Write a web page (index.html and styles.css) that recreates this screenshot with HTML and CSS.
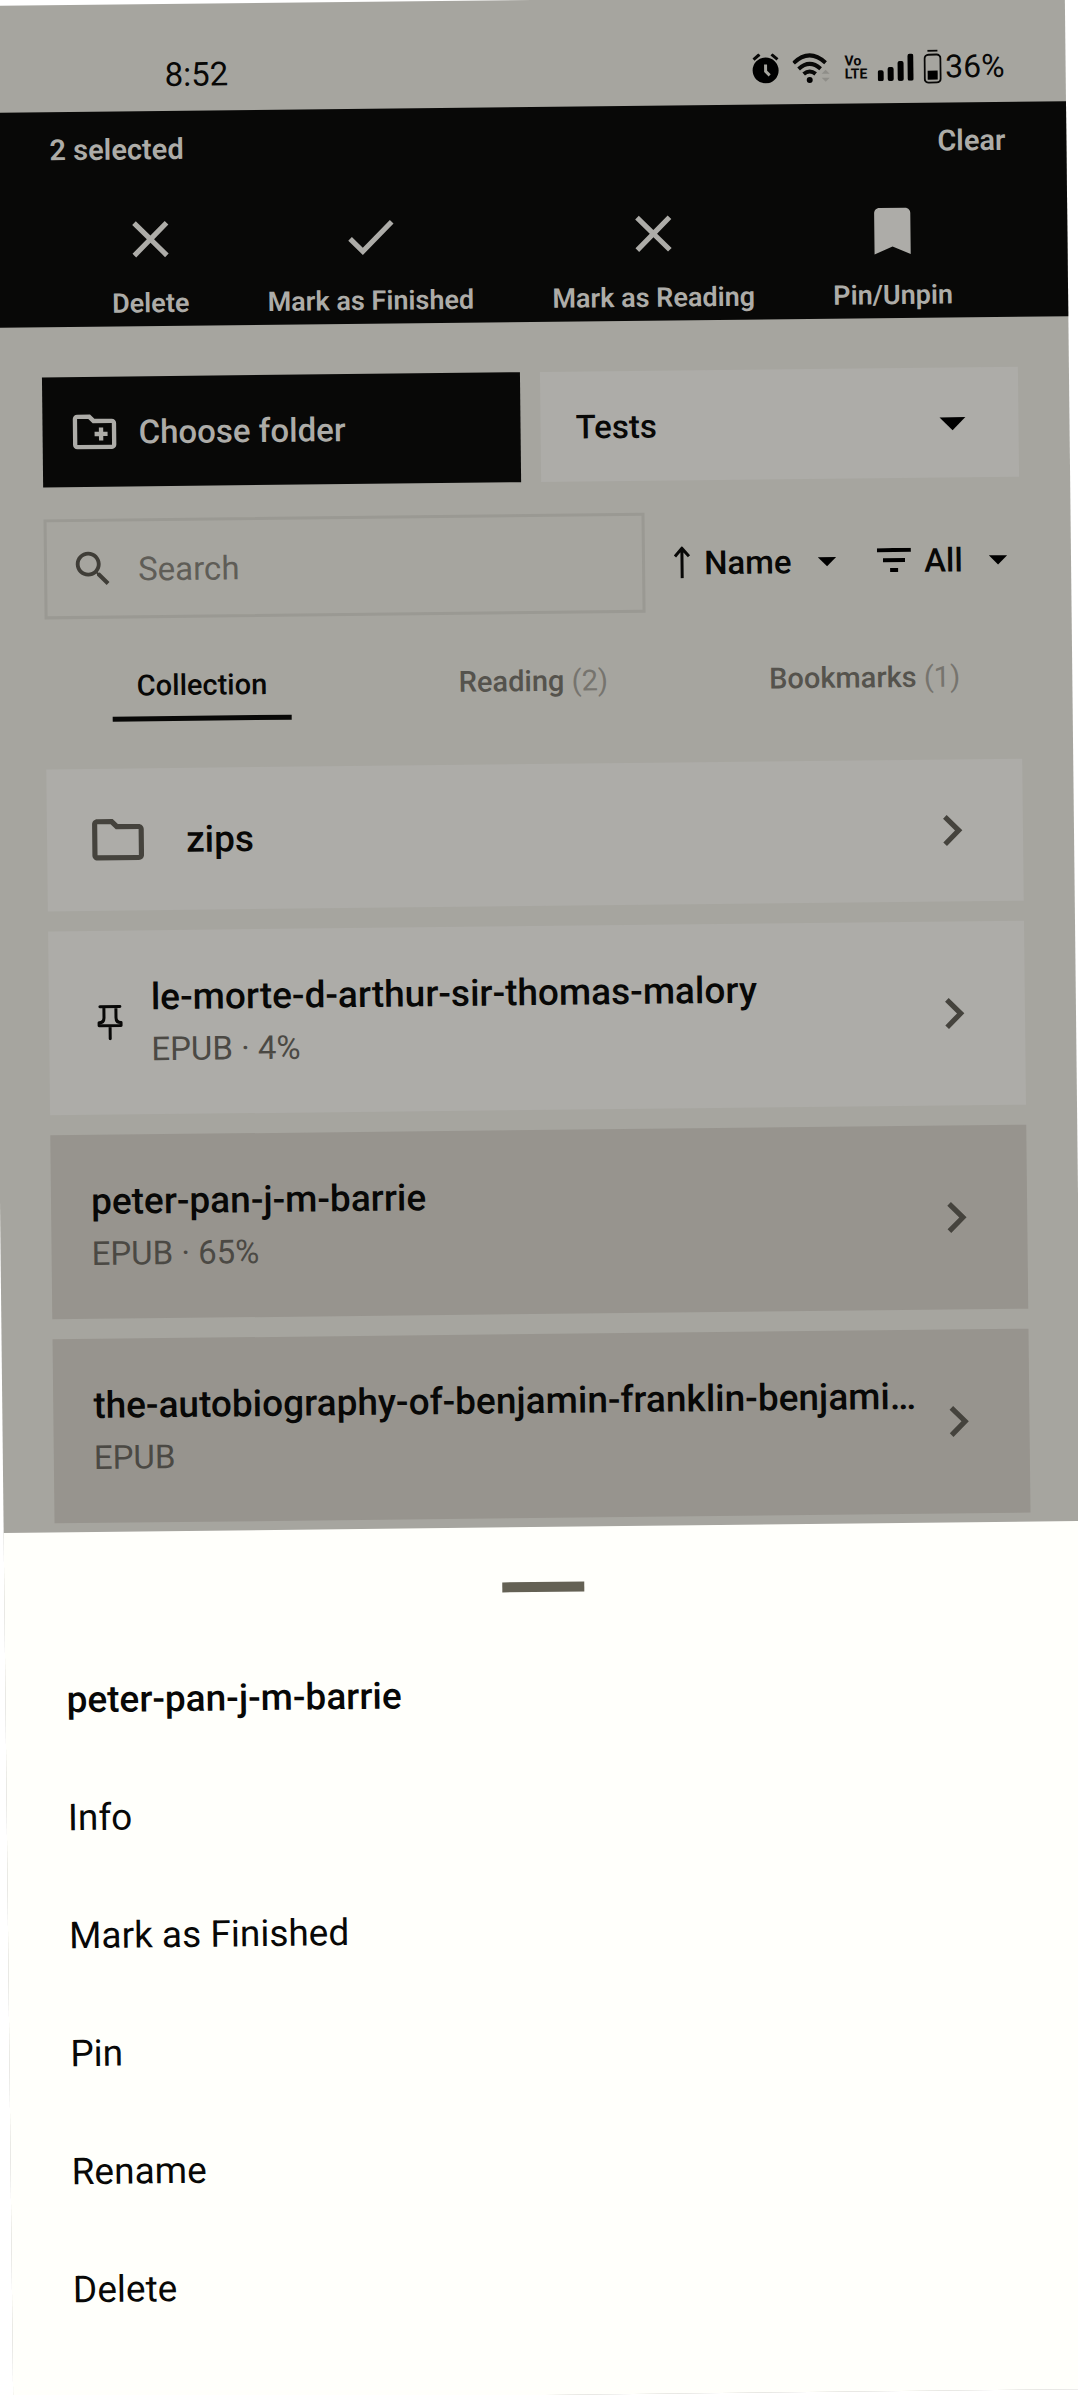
FILE: index.html
```html
<!DOCTYPE html>
<html lang="en">
<head>
    <meta charset="UTF-8">
    <meta name="viewport" content="width=device-width, initial-scale=1">
    <title>Library</title>
    <link rel="stylesheet" href="styles.css">
</head>
<body>
<!-- shared icons -->
<svg class="sprite" aria-hidden="true">
    <symbol id="close" viewBox="0 0 24 24"><path d="M19 6.41L17.59 5 12 10.59 6.41 5 5 6.41 10.59 12 5 17.59 6.41 19 12 13.41 17.59 19 19 17.59 13.41 12z"/></symbol>
    <symbol id="check" viewBox="0 0 24 24"><path d="M9 16.17L4.83 12l-1.42 1.41L9 19 21 7l-1.41-1.41z"/></symbol>
    <symbol id="bookmark" viewBox="0 0 24 24"><path d="M17 3H7c-1.1 0-2 .9-2 2v16l7-3 7 3V5c0-1.1-.9-2-2-2z"/></symbol>
    <symbol id="caret" viewBox="0 0 24 24"><path d="M7 10l5 5 5-5z"/></symbol>
    <symbol id="chevron" viewBox="0 0 24 24"><path d="M10 6L8.59 7.41 13.17 12l-4.58 4.59L10 18l6-6z"/></symbol>
</svg>
<div class="screen">
    <div class="status">
        <span class="time">8:52</span>
        <div class="statusIcons">
            <svg width="28" height="30" viewBox="0 0 28 30"><circle cx="14" cy="17" r="13"/><path d="M2 6l6-5M26 6l-6-5" stroke="#080807" stroke-width="3"/><path d="M14 11v7l4 4" fill="none" stroke="#a6a59f" stroke-width="3"/></svg>
            <svg class="wifi" width="38" height="30" viewBox="0 0 38 30"><g fill="none" stroke="#080807" stroke-width="4"><path d="M1 10Q17-5 33 10"/><path d="M6 16Q17 6 28 16"/><path d="M11 21Q17 16 23 21"/></g><circle cx="17" cy="27" r="3"/><path d="M29 21l4-4 4 4zM29 25l4 4 4-4z" fill="#8f8e89"/></svg>
            <span class="volte">Vo<br>LTE</span>
            <svg class="signal" width="36" height="28" viewBox="0 0 36 28"><rect y="17" width="6" height="11" rx="2"/><rect x="10" y="14" width="6" height="14" rx="2"/><rect x="20" y="8" width="6" height="20" rx="2"/><rect x="30" y="1" width="6" height="27" rx="2"/></svg>
            <svg class="battery" width="18" height="34" viewBox="0 0 18 34"><path d="M4 1h10" stroke="#080807" stroke-width="2"/><rect x="1" y="5" width="16" height="28" rx="4" fill="none" stroke="#080807" stroke-width="2"/><rect x="4" y="21" width="10" height="9"/></svg>
            <span class="percent">36%</span>
        </div>
    </div>

    <div class="selection">
        <div class="selectionTop">
            <span>2 selected</span>
            <button type="button">Clear</button>
        </div>
        <div class="actions">
            <button type="button"><svg class="icon"><use href="#close"/></svg>Delete</button>
            <button type="button"><svg class="icon"><use href="#check"/></svg>Mark as Finished</button>
            <button type="button"><svg class="icon"><use href="#close"/></svg>Mark as Reading</button>
            <button type="button"><svg class="icon"><use href="#bookmark"/></svg>Pin/Unpin</button>
        </div>
    </div>

    <div class="library">
        <div class="folders">
            <button type="button" class="choose">
                <svg width="52" height="52" viewBox="0 0 24 24"><path d="M20 6h-8l-2-2H4c-1.11 0-1.99.89-1.99 2L2 18c0 1.11.89 2 2 2h16c1.11 0 2-.89 2-2V8c0-1.11-.89-2-2-2zm0 12H4V6h5.17l2 2H20v10zm-8-4h2v2h2v-2h2v-2h-2v-2h-2v2h-2z"/></svg>
                Choose folder
            </button>
            <label class="folderSelect">
                <select aria-label="Folder"><option>Tests</option></select>
                <svg class="icon"><use href="#caret"/></svg>
            </label>
        </div>

        <div class="filters">
            <label class="search">
                <svg width="46" height="46" viewBox="0 0 24 24"><path d="M15.5 14h-.79l-.28-.27C15.41 12.59 16 11.11 16 9.5 16 5.91 13.09 3 9.5 3S3 5.91 3 9.5 5.91 16 9.5 16c1.61 0 3.09-.59 4.23-1.57l.27.28v.79l5 4.99L20.49 19l-4.99-5zm-6 0C7.01 14 5 11.99 5 9.5S7.01 5 9.5 5 14 7.01 14 9.5 11.99 14 9.5 14z"/></svg>
                <input type="text" placeholder="Search" aria-label="Search">
            </label>
            <label class="filter">
                <svg width="18" height="32" viewBox="0 0 18 32" fill="none" stroke="#080807" stroke-width="3"><path d="M9 32V2M2 10l7-8 7 8"/></svg>
                <select aria-label="Sort by"><option>Name</option></select>
                <svg class="smallCaret"><use href="#caret"/></svg>
            </label>
            <label class="filter">
                <svg width="34" height="24" viewBox="0 0 34 24"><path d="M0 0h34v4H0zM6 10h22v4H6zM13 20h8v4h-8z"/></svg>
                <select aria-label="Filter"><option>All</option></select>
                <svg class="smallCaret"><use href="#caret"/></svg>
            </label>
        </div>
    </div>

    <div class="tabs">
        <button type="button" class="active">Collection</button>
        <button type="button">Reading <span>(2)</span></button>
        <button type="button">Bookmarks <span>(1)</span></button>
    </div>

    <div class="books">
        <a href="#" class="card folder">
            <svg class="icon" viewBox="0 0 24 24"><path d="M9.17 6l2 2H20v10H4V6h5.17M10 4H4c-1.1 0-1.99.9-1.99 2L2 18c0 1.1.9 2 2 2h16c1.1 0 2-.9 2-2V8c0-1.1-.9-2-2-2h-8l-2-2z"/></svg>
            <div class="text"><div class="name">zips</div></div>
            <svg class="icon"><use href="#chevron"/></svg>
        </a>
        <a href="#" class="card">
            <svg class="pin" width="26" height="36" viewBox="0 0 26 36" fill="none" stroke="#080807" stroke-width="3" stroke-linejoin="round" stroke-linecap="round"><path d="M3 2h20M7 2v11q0 5-5 5v3h22v-3q-5 0-5-5V2M13 21v13"/></svg>
            <div class="text"><div class="name">le-morte-d-arthur-sir-thomas-malory</div><div class="info">EPUB · 4%</div></div>
            <svg class="icon"><use href="#chevron"/></svg>
        </a>
        <a href="#" class="card selected">
            <div class="text"><div class="name">peter-pan-j-m-barrie</div><div class="info">EPUB · 65%</div></div>
            <svg class="icon"><use href="#chevron"/></svg>
        </a>
        <a href="#" class="card selected">
            <div class="text"><div class="name">the-autobiography-of-benjamin-franklin-benjami…</div><div class="info">EPUB</div></div>
            <svg class="icon"><use href="#chevron"/></svg>
        </a>
    </div>

    <div class="sheet">
        <div class="handle"></div>
        <h2>peter-pan-j-m-barrie</h2>
        <button type="button">Info</button>
        <button type="button">Mark as Finished</button>
        <button type="button">Pin</button>
        <button type="button">Rename</button>
        <button type="button">Delete</button>
    </div>
</div>
</body>
</html>
```
FILE: styles.css
```css
* {
    box-sizing: border-box;
}

html, body {
    margin: 0;
    background: #fff;
    overflow: hidden;
}

body, button, select, input {
    font-family: Roboto, "Noto Sans", sans-serif;
    color: #080807;
}

button, select, input {
    margin: 0;
    padding: 0;
    border: 0;
    background: none;
    appearance: none;
    outline: none;
}

svg {
    display: block;
    flex: none;
}

.sprite {
    display: none;
}

.icon {
    width: 62px;
    height: 62px;
}

/* the whole screen is slightly tilted */
.screen {
    display: flex;
    flex-direction: column;
    min-height: 100vh;
    background: #a6a59f;
    transform: rotate(-0.63deg);
}

/* status bar */
.status {
    display: flex;
    justify-content: space-between;
    align-items: center;
    height: 107px;
    padding: 34px 61px 0 177px;
}

.time {
    font-size: 33px;
}

.statusIcons {
    display: flex;
    align-items: center;
}

.wifi {
    margin-left: 13px;
}

.volte {
    margin-left: 14px;
    font-size: 14px;
    font-weight: bold;
    line-height: 13px;
}

.signal {
    margin-left: 10px;
}

.battery {
    margin-left: 10px;
}

.percent {
    margin-left: 4px;
    font-size: 32px;
}

/* selection toolbar */
.selection {
    height: 215px;
    padding: 20px 61px 0;
    background: #080807;
    color: #adaca8;
}

.selection button {
    color: #adaca8;
    font-weight: 600;
}

.selectionTop {
    display: flex;
    justify-content: space-between;
    font-size: 29px;
    font-weight: 600;
    line-height: 36px;
}

.selectionTop button {
    font-size: 29px;
}

.actions {
    display: flex;
    justify-content: space-between;
    padding: 41px 54px 0 61px;
}

.actions button {
    display: flex;
    flex-direction: column;
    align-items: center;
    gap: 17px;
    font-size: 27px;
    line-height: 32px;
}

.actions svg {
    fill: #adaca8;
}

/* folder row */
.library {
    padding: 50px 51px 0;
}

.folders {
    display: grid;
    grid-template-columns: 1fr 1fr;
    gap: 20px;
}

.choose {
    display: flex;
    align-items: center;
    gap: 18px;
    height: 110px;
    padding: 0 26px;
    background: #080807;
    color: #adaca8;
    font-size: 33px;
    font-weight: 500;
}

.choose svg {
    fill: #adaca8;
}

.folderSelect {
    display: flex;
    align-items: center;
    padding: 0 35px;
    background: #adaca8;
}

select {
    font-size: 33px;
    font-weight: 500;
    opacity: 1;
}

.folderSelect select {
    flex: 1;
}

/* search, sort, filter */
.filters {
    display: flex;
    align-items: center;
    margin-top: 32px;
}

.search {
    display: flex;
    flex: 1;
    align-items: center;
    gap: 22px;
    height: 100px;
    padding: 0 23px;
    border: 3px solid #9a9993;
}

.search svg {
    fill: #3f3d37;
}

.search input {
    flex: 1;
    min-width: 0;
    font-size: 33px;
}

.search input::placeholder {
    color: #5f5d57;
    opacity: 1;
}

.filter {
    display: flex;
    align-items: center;
    gap: 13px;
    margin-left: 28px;
}

.smallCaret {
    width: 44px;
    height: 44px;
}

/* tabs */
.tabs {
    display: grid;
    grid-template-columns: repeat(3, 1fr);
    justify-items: center;
    margin-top: 37px;
    padding: 0 42px;
}

.tabs button {
    height: 66px;
    padding: 0 24px 2px;
    border-bottom: 5px solid transparent;
    color: #55534d;
    font-size: 29px;
    font-weight: 500;
}

.tabs span {
    color: #76746e;
    font-weight: 400;
}

.tabs .active {
    border-color: #080807;
    color: #080807;
}

/* list */
.books {
    display: flex;
    flex-direction: column;
    gap: 20px;
    padding: 47px 51px 9px;
}

.card {
    display: flex;
    align-items: center;
    height: 184px;
    padding: 0 40px;
    background: #adaca8;
    color: #080807;
    text-decoration: none;
}

.card .icon {
    fill: #45433d;
}

.selected {
    background: #97948e;
}

.folder {
    height: 142px;
}

.folder .text {
    margin-left: 37px;
}

.pin {
    margin: 0 28px 0 8px;
}

.text {
    flex: 1;
    min-width: 0;
    padding-top: 2px;
}

.name {
    overflow: hidden;
    font-size: 37px;
    font-weight: 500;
    line-height: 52px;
    text-overflow: ellipsis;
    white-space: nowrap;
}

.info {
    color: #4b4944;
    font-size: 33px;
    line-height: 52px;
}

/* bottom sheet */
.sheet {
    display: flex;
    flex: 1;
    flex-direction: column;
    background: #fffffb;
}

.handle {
    width: 82px;
    height: 10px;
    margin: 55px auto 44px;
    background: #646154;
}

.sheet h2, .sheet button {
    height: 118px;
    margin: 0;
    padding: 0 61px;
    font-size: 37px;
    line-height: 118px;
    text-align: left;
}

.sheet h2 {
    font-weight: 500;
}
```
